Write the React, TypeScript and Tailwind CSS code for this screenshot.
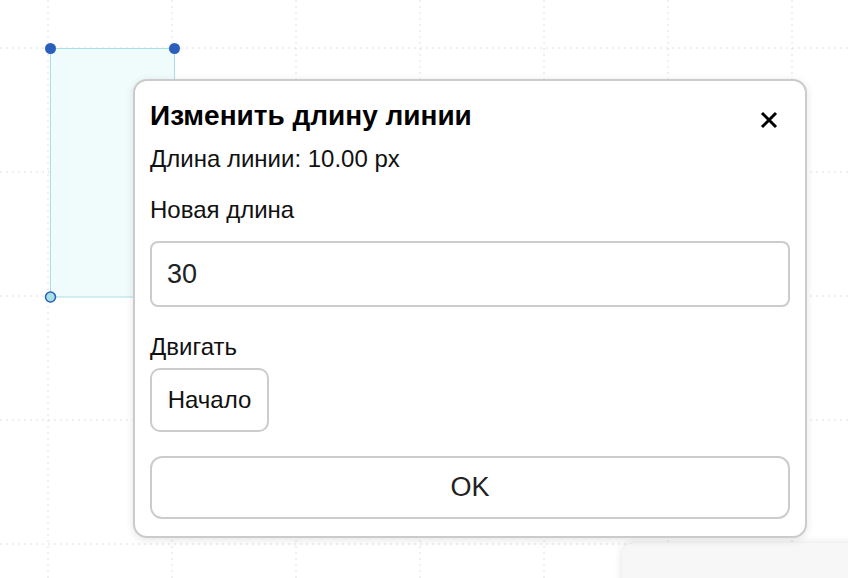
import React from "react"

const GRID = [48, 172, 296, 420, 544, 668, 792]

function Canvas() {
  return (
    <svg className="absolute inset-0" width="848" height="578" viewBox="0 0 848 578">
      {GRID.map((x) => (
        <line key={"v" + x} x1={x} y1={0} x2={x} y2={578} stroke="#e0e0e0" strokeWidth={1} strokeDasharray="2 4" />
      ))}
      {GRID.slice(0, 5).map((y) => (
        <line key={"h" + y} x1={0} y1={y} x2={848} y2={y} stroke="#e0e0e0" strokeWidth={1} strokeDasharray="2 4" />
      ))}
      {/* selected shape */}
      <rect x={50.5} y={48.5} width={124} height={248.5} fill="#f0fbfb" stroke="#a6e0e4" strokeWidth={1} />
      <circle cx={50.5} cy={48.5} r={5.5} fill="#2a5fbd" />
      <circle cx={174.5} cy={48.5} r={5.5} fill="#2a5fbd" />
      <circle cx={50.5} cy={297} r={5} fill="#a9e0e6" stroke="#2a5fbd" strokeWidth={1.5} />
    </svg>
  )
}

function CloseIcon() {
  return (
    <svg width="18" height="18" viewBox="0 0 18 18">
      <path d="M2 2 L16 16 M16 2 L2 16" stroke="#000" strokeWidth={3} strokeLinecap="butt" />
    </svg>
  )
}

export default function App() {
  return (
    <div className="relative w-[848px] h-[578px] overflow-hidden bg-white" style={{ fontFamily: '"Liberation Sans", Arial, sans-serif' }}>
      <Canvas />

      {/* panel peeking in at the bottom right */}
      <div className="absolute left-[622px] top-[543px] w-[320px] h-[120px] rounded-[12px] bg-[#f7f7f7] shadow-[0_0_8px_rgba(0,0,0,0.12)]" />

      {/* dialog */}
      <div className="absolute left-[133px] top-[79px] w-[674px] rounded-[14px] border-2 border-[#cbcbcb] bg-white px-[15px] pt-[19px] pb-[17px] shadow-[0_2px_8px_rgba(0,0,0,0.1)]">
        <div className="flex items-start justify-between">
          <h3 className="text-[28px] leading-[32px] font-bold text-black">Изменить длину линии</h3>
          <button className="mt-[11px] mr-[12px]">
            <CloseIcon />
          </button>
        </div>
        <p className="mt-[13px] text-[24px] leading-[28px] text-[#111]">Длина линии: 10.00 px</p>

        <label className="mt-[23px] block text-[24px] leading-[28px] text-[#111]">Новая длина</label>
        <input
          defaultValue="30"
          className="mt-[17px] block h-[66px] w-full rounded-[8px] border-2 border-[#cccccc] px-[15px] text-[27px] text-[#222] outline-none"
        />

        <div className="mt-[26px] text-[24px] leading-[28px] text-[#111]">Двигать</div>
        <div className="mt-[7px] flex">
          <button className="h-[64px] w-[119px] rounded-[10px] border-2 border-[#cccccc] bg-white text-[24px] text-[#111]">
            Начало
          </button>
        </div>

        <button className="mt-[24px] block h-[63px] w-full rounded-[12px] border-2 border-[#cccccc] bg-white text-[27px] text-[#222]">
          OK
        </button>
      </div>
    </div>
  )
}
